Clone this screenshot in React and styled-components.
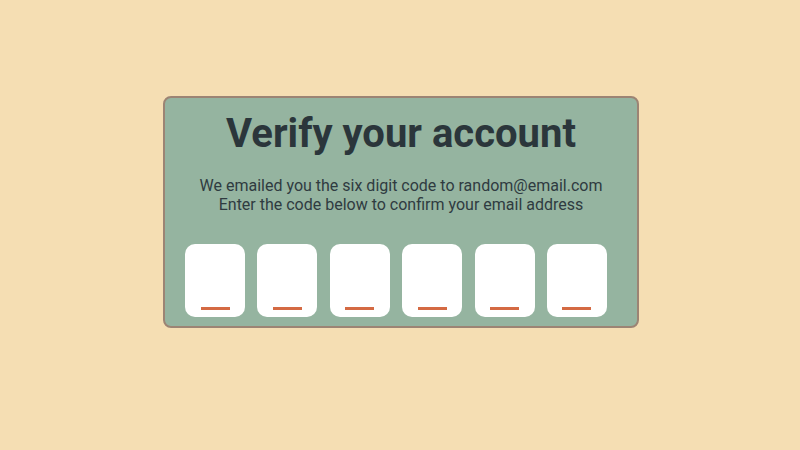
import React from 'react'
import styled, { createGlobalStyle } from 'styled-components'

const GlobalStyle = createGlobalStyle`
  * { box-sizing: border-box; }
  body {
    margin: 0;
    background: #f5deb3;
    font-family: Roboto, "Liberation Sans", sans-serif;
  }
`;

const Page = styled.div`
  width: 100%;
  height: 100vh;
  display: flex;
  flex-direction: column;
  align-items: center;
  padding-top: 96px;
  padding-left: 2px;
`;

const Card = styled.div`
  width: 476px;
  height: 232px;
  background: #95b4a0;
  border: 2px solid #9c8474;
  border-radius: 8px;
  display: flex;
  flex-direction: column;
  align-items: center;
  padding-top: 10px;
`;

const Title = styled.h1`
  margin: 0;
  font-size: 40px;
  font-weight: 700;
  color: #2b363b;
  line-height: 52px;
`;

const Text = styled.p`
  margin: 16px 0 0;
  font-size: 16px;
  line-height: 19px;
  color: #2f3b40;
  text-align: center;
`;

const Codes = styled.div`
  align-self: flex-start;
  display: flex;
  gap: 12.4px;
  margin-top: 30px;
  padding-left: 20px;
`;

const Digit = styled.div`
  width: 60px;
  height: 73px;
  background: #ffffff;
  border-radius: 10px;
  display: flex;
  align-items: flex-end;
  justify-content: center;
  padding-bottom: 7px;
`;

const Line = styled.span`
  display: block;
  width: 29px;
  height: 3px;
  background: #d46a43;
`;

const WorldCode = () => {
  const digits = [0, 1, 2, 3, 4, 5]

  return (
    <Page>
      <GlobalStyle />
      <Card>
        <Title>Verify your account</Title>
        <Text>
          We emailed you the six digit code to random@email.com
          <br />
          Enter the code below to confirm your email address
        </Text>
        <Codes>
          {digits.map((d) => (
            <Digit key={d}>
              <Line />
            </Digit>
          ))}
        </Codes>
      </Card>
    </Page>
  )
}

export default WorldCode
